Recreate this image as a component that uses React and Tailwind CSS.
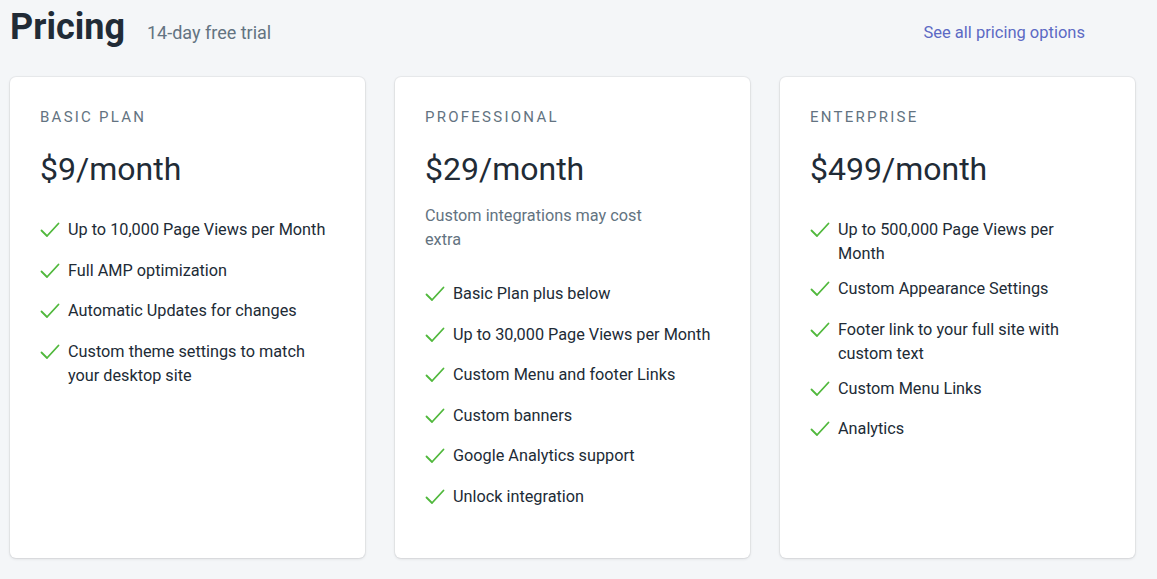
import React from "react";

const plans = [
  {
    name: "Basic Plan",
    price: "$9/month",
    features: [
      "Up to 10,000 Page Views per Month",
      "Full AMP optimization",
      "Automatic Updates for changes",
      "Custom theme settings to match your desktop site",
    ],
  },
  {
    name: "Professional",
    price: "$29/month",
    note: "Custom integrations may cost extra",
    features: [
      "Basic Plan plus below",
      "Up to 30,000 Page Views per Month",
      "Custom Menu and footer Links",
      "Custom banners",
      "Google Analytics support",
      "Unlock integration",
    ],
  },
  {
    name: "Enterprise",
    price: "$499/month",
    features: [
      "Up to 500,000 Page Views per Month",
      "Custom Appearance Settings",
      "Footer link to your full site with custom text",
      "Custom Menu Links",
      "Analytics",
    ],
  },
];

const Check = () => (
  <svg width="20" height="16" viewBox="0 0 20 16" className="mt-1 shrink-0">
    <polyline
      points="1.5,8.5 7,14 18.5,1.5"
      fill="none"
      stroke="#50b83c"
      strokeWidth="1.8"
      strokeLinecap="round"
      strokeLinejoin="round"
    />
  </svg>
);

const PlanCard = ({ plan }) => (
  <div className="bg-white rounded-md shadow-[0_0_0_1px_rgba(63,63,68,0.05),0_1px_3px_0_rgba(63,63,68,0.15)] px-[30px] pt-[30px] h-[481px]">
    <p className="text-[15px] uppercase tracking-[0.15em] text-[#637381] leading-5">
      {plan.name}
    </p>
    <p className="mt-[22px] text-[32px] leading-10 text-[#212b36]">{plan.price}</p>
    {plan.note && (
      <p className="mt-[15px] max-w-[240px] text-[16.25px] leading-6 text-[#637381]">
        {plan.note}
      </p>
    )}
    <ul className={`${plan.note ? "mt-[30px]" : "mt-[29px]"} flex flex-col gap-[11px]`}>
      {plan.features.map((f, i) => (
        <li key={i} className="flex min-h-[29.6px] gap-[8px] text-[16.25px] leading-6 text-[#212b36]">
          <Check />
          <span className="max-w-[259px]">{f}</span>
        </li>
      ))}
    </ul>
  </div>
);

export default function App() {
  return (
    <div
      className="min-h-[579px] bg-[#f4f6f8] px-[10px]"
      style={{ fontFamily: "Roboto, 'Noto Sans', sans-serif" }}
    >
      <div className="flex items-end justify-between pt-[5px] pr-[62px]">
        <div className="flex items-baseline gap-[22px]">
          <h1 className="text-[36px] font-bold leading-[44px] text-[#212b36]">Pricing</h1>
          <span className="text-[18px] text-[#637381]">14-day free trial</span>
        </div>
        <a href="#" className="mb-[3px] text-[16.5px] text-[#5c6ac4]">
          See all pricing options
        </a>
      </div>
      <div className="mt-[28px] grid grid-cols-3 gap-[30px] pr-[12px]">
        {plans.map((p) => (
          <PlanCard key={p.name} plan={p} />
        ))}
      </div>
    </div>
  );
}
